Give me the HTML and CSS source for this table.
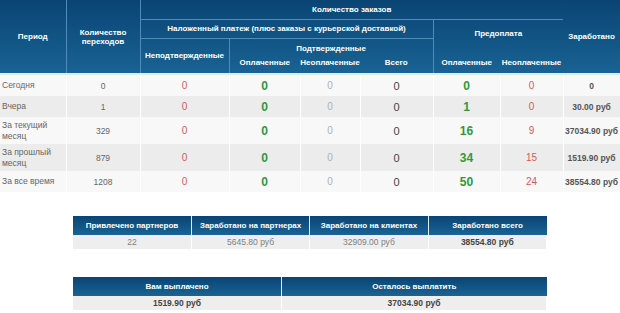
FILE: index.html
```html
<!DOCTYPE html>
<html>
<head>
<meta charset="utf-8">
<link rel="stylesheet" href="styles.css">
</head>
<body>
<div class="page">
<table class="stats">
  <colgroup>
    <col style="width:66px"><col style="width:74px"><col style="width:89px"><col style="width:71px"><col style="width:60px"><col style="width:73px"><col style="width:67px"><col style="width:63px"><col style="width:57px">
  </colgroup>
  <thead>
    <tr class="h1">
      <th rowspan="4" class="vl">Период</th>
      <th rowspan="4" class="vl">Количество<br>переходов</th>
      <th colspan="6" class="hb">Количество заказов</th>
      <th rowspan="4" class="vl last">Заработано</th>
    </tr>
    <tr class="h2">
      <th colspan="4" class="hb vr">Наложенный платеж (плюс заказы с курьерской доставкой)</th>
      <th colspan="2" rowspan="2" class="pre">Предоплата</th>
    </tr>
    <tr class="h3">
      <th rowspan="2" class="vr">Неподтвержденные</th>
      <th colspan="3" class="vr sub">Подтвержденные</th>
    </tr>
    <tr class="h4">
      <th class="sub2">Оплаченные</th>
      <th class="sub2">Неоплаченные</th>
      <th class="sub2 vr">Всего</th>
      <th class="sub2">Оплаченные</th>
      <th class="sub2">Неоплаченные</th>
    </tr>
  </thead>
  <tbody>
    <tr class="r">
      <td class="per">Сегодня</td><td class="cnt">0</td><td class="red">0</td><td class="grn">0</td><td class="gry">0</td><td class="dk">0</td><td class="grn">0</td><td class="red">0</td><td class="earn">0</td>
    </tr>
    <tr class="r alt">
      <td class="per">Вчера</td><td class="cnt">1</td><td class="red">0</td><td class="grn">0</td><td class="gry">0</td><td class="dk">0</td><td class="grn">1</td><td class="red">0</td><td class="earn">30.00 руб</td>
    </tr>
    <tr class="r tall">
      <td class="per">За текущий<br>месяц</td><td class="cnt">329</td><td class="red">0</td><td class="grn">0</td><td class="gry">0</td><td class="dk">0</td><td class="grn">16</td><td class="red">9</td><td class="earn">37034.90 руб</td>
    </tr>
    <tr class="r tall alt">
      <td class="per">За прошлый<br>месяц</td><td class="cnt">879</td><td class="red">0</td><td class="grn">0</td><td class="gry">0</td><td class="dk">0</td><td class="grn">34</td><td class="red">15</td><td class="earn">1519.90 руб</td>
    </tr>
    <tr class="r">
      <td class="per">За все время</td><td class="cnt">1208</td><td class="red">0</td><td class="grn">0</td><td class="gry">0</td><td class="dk">0</td><td class="grn">50</td><td class="red">24</td><td class="earn">38554.80 руб</td>
    </tr>
  </tbody>
</table>

<table class="small t4">
  <thead>
    <tr><th>Привлечено партнеров</th><th>Заработано на партнерах</th><th>Заработано на клиентах</th><th>Заработано всего</th></tr>
  </thead>
  <tbody>
    <tr><td>22</td><td>5645.80 руб</td><td>32909.00 руб</td><td class="strong">38554.80 руб</td></tr>
  </tbody>
</table>

<table class="small t2">
  <thead>
    <tr><th class="c1">Вам выплачено</th><th>Осталось выплатить</th></tr>
  </thead>
  <tbody>
    <tr><td class="strong">1519.90 руб</td><td class="strong">37034.90 руб</td></tr>
  </tbody>
</table>
</div>
</body>
</html>
```

FILE: styles.css
```css
html, body {
  margin: 0;
  padding: 0;
  background: #ffffff;
}
.page {
  width: 620px;
  font-family: "Liberation Sans", Arial, sans-serif;
}
table {
  border-collapse: collapse;
  border-spacing: 0;
}
.stats {
  width: 620px;
  table-layout: fixed;
}
.stats thead {
  background: linear-gradient(to bottom, #0a4474 0%, #115484 50%, #1a6394 100%);
}
.stats thead th {
  color: #ffffff;
  font-size: 8px;
  font-weight: bold;
  padding: 0;
  text-align: center;
  vertical-align: middle;
}
.stats thead tr:last-child th,
.stats thead th[rowspan="4"],
.stats thead th[rowspan="2"] {
  border-bottom: 2px solid #d8eef9;
}
.stats thead th.pre {
  border-bottom: none;
}
.h1 { height: 19px; }
.h2 { height: 19px; }
.h3 { height: 18px; }
.h4 { height: 18px; }
.vl { border-right: 1px solid #4d8cbb; }
.vl.last { border-right: none; }
.vr { border-right: 1px solid #4d8cbb; }
.hb { border-bottom: 1px solid #4d8cbb; }
.stats thead th.sub { vertical-align: bottom; padding-bottom: 3px; }
.stats thead th.sub2 { vertical-align: top; padding-top: 2px; }
.stats thead th.pre { vertical-align: top; padding-top: 9px; }

.r td {
  height: 21px;
  padding: 0;
  text-align: center;
  vertical-align: middle;
  background: #f8f8f8;
  border-right: 1px solid #ffffff;
}
.r.alt td { background: #ececec; }
.r.tall td { height: 27px; }
.r td.per {
  text-align: left;
  padding-left: 2px;
  font-size: 8.5px;
  color: #666;
  line-height: 11px;
}
.cnt {
  font-size: 8.5px;
  color: #666;
}
.red {
  font-size: 10px;
  color: #d65a5a;
}
.grn {
  font-size: 12px;
  font-weight: bold;
  color: #2f9a3c;
}
.gry {
  font-size: 10px;
  color: #b0b0b0;
}
.dk {
  font-size: 11px;
  color: #444;
}
.earn {
  font-size: 8.5px;
  font-weight: bold;
  color: #555;
}

.small {
  width: 474px;
  margin-left: 73px;
  table-layout: fixed;
}
.t4 { margin-top: 24px; }
.t2 { margin-top: 28px; }
.small th {
  height: 19px;
  padding: 0;
  font-size: 8px;
  font-weight: bold;
  color: #fff;
  background: linear-gradient(to bottom, #0a4474 0%, #115484 50%, #1a6394 100%);
  border-right: 1px solid #d8eef9;
  text-align: center;
}
.small th:last-child { border-right: none; }
.small td {
  height: 14px;
  padding: 0;
  text-align: center;
  background: #eeeeee;
  border-right: 1px solid #ffffff;
  font-size: 8.5px;
  color: #808080;
}
.small td.strong { font-weight: bold; color: #444; }
.t2 th.c1 { width: 208px; }
```
